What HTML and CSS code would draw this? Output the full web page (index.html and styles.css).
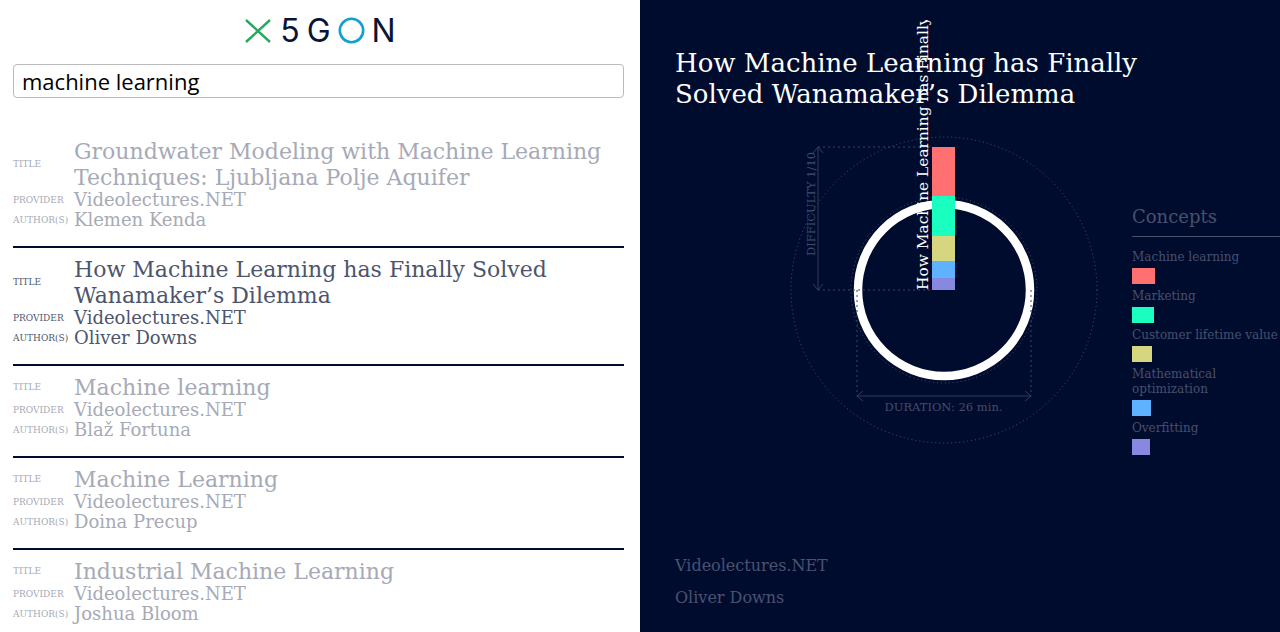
FILE: index.html
```html
<!DOCTYPE html>
<html lang="en">
  <head>
    <meta charset="utf-8" />
    <title>X5GON search</title>
    <link rel="stylesheet" href="styles.css">
  </head>

  <body>
    <div class="page">
      <!-- Search and results -->
      <section class="search-side">
        <div class="logo">
          <svg class="logo-x" viewBox="0 0 26 24"><path d="M1 1 L25 23 M25 1 L1 23"></path></svg>
          <span class="logo-letter five">5</span>
          <span class="logo-letter">G</span>
          <svg class="logo-o" viewBox="0 0 27 27"><circle cx="13.500" cy="13.500" r="11.700"></circle></svg>
          <span class="logo-letter">N</span>
        </div>
        <input class="search-box" type="text" value="machine learning">

        <div class="results">
          <div class="result">
            <span class="label">TITLE</span><span class="title">Groundwater Modeling with Machine Learning Techniques: Ljubljana Polje Aquifer</span>
            <span class="label">PROVIDER</span><span class="value">Videolectures.NET</span>
            <span class="label">AUTHOR(S)</span><span class="value">Klemen Kenda</span>
          </div>
          <div class="result active">
            <span class="label">TITLE</span><span class="title">How Machine Learning has Finally Solved Wanamaker’s Dilemma</span>
            <span class="label">PROVIDER</span><span class="value">Videolectures.NET</span>
            <span class="label">AUTHOR(S)</span><span class="value">Oliver Downs</span>
          </div>
          <div class="result">
            <span class="label">TITLE</span><span class="title">Machine learning</span>
            <span class="label">PROVIDER</span><span class="value">Videolectures.NET</span>
            <span class="label">AUTHOR(S)</span><span class="value">Blaž Fortuna</span>
          </div>
          <div class="result">
            <span class="label">TITLE</span><span class="title">Machine Learning</span>
            <span class="label">PROVIDER</span><span class="value">Videolectures.NET</span>
            <span class="label">AUTHOR(S)</span><span class="value">Doina Precup</span>
          </div>
          <div class="result">
            <span class="label">TITLE</span><span class="title">Industrial Machine Learning</span>
            <span class="label">PROVIDER</span><span class="value">Videolectures.NET</span>
            <span class="label">AUTHOR(S)</span><span class="value">Joshua Bloom</span>
          </div>
        </div>
      </section>

      <!-- Selected material -->
      <section class="detail-side">
        <h1 class="detail-title">How Machine Learning has Finally Solved Wanamaker’s Dilemma</h1>

        <svg class="chart" viewBox="0 0 400 440">
          <circle class="orbit" cx="224" cy="270" r="153"></circle>
          <circle class="orbit" cx="224" cy="270" r="93"></circle>
          <circle class="ring" cx="224" cy="270" r="86"></circle>

          <!-- difficulty guide -->
          <path class="guide-dash" d="M98 127 H212 M98 270 H212"></path>
          <path class="guide" d="M98 127 V270 M93 133 L98 127 L103 133 M93 264 L98 270 L103 264"></path>
          <text class="guide-text" transform="translate(95, 184) rotate(-90)" text-anchor="middle">DIFFICULTY 1/10</text>

          <!-- duration guide -->
          <path class="guide-dash" d="M137 270 V376 M311 270 V376"></path>
          <path class="guide" d="M137 376 H311 M143 371 L137 376 L143 381 M305 371 L311 376 L305 381"></path>
          <text class="guide-text" x="223.500" y="391" text-anchor="middle">DURATION: 26 min.</text>

          <rect x="212" y="127" width="23" height="49" fill="#ff7070"></rect>
          <rect x="212" y="176" width="23" height="40" fill="#1affc0"></rect>
          <rect x="212" y="216" width="23" height="25" fill="#d6d680"></rect>
          <rect x="212" y="241" width="23" height="17" fill="#5fb2ff"></rect>
          <rect x="212" y="258" width="23" height="12" fill="#8888e0"></rect>

          <text class="bar-title" transform="translate(208, 270) rotate(-90)">How Machine Learning has Finally Solved Wanamaker’s Dilemma</text>
        </svg>

        <div class="concepts">
          <h2 class="concepts-head">Concepts</h2>
          <div class="concept">Machine learning</div>
          <div class="swatch swatch-ml"></div>
          <div class="concept">Marketing</div>
          <div class="swatch swatch-mk"></div>
          <div class="concept">Customer lifetime value</div>
          <div class="swatch swatch-cl"></div>
          <div class="concept">Mathematical optimization</div>
          <div class="swatch swatch-mo"></div>
          <div class="concept">Overfitting</div>
          <div class="swatch swatch-of"></div>
        </div>

        <div class="detail-foot">
          <div>Videolectures.NET</div>
          <div>Oliver Downs</div>
        </div>
      </section>
    </div>
  </body>
</html>
```

FILE: styles.css
```css
html,
body {
  margin: 0;
  padding: 0;
  height: 632px;
  overflow: hidden;
  background-color: white;
}

.page {
  display: grid;
  grid-template-columns: 640px 640px;
  height: 632px;
  font-family: "DejaVu Serif", serif;
}

/* left side */
.search-side {
  padding: 0 16px 0 13px;
  overflow: hidden;
}

.logo {
  display: flex;
  justify-content: center;
  align-items: center;
  height: 64px;
  padding-bottom: 3px;
  padding-left: 4px;
  box-sizing: border-box;
  font-family: Inter, sans-serif;
  font-size: 32px;
  font-weight: 400;
  line-height: 32px;
  color: #0a1436;
}

.logo-x {
  width: 26px;
  height: 24px;
  margin-right: 9px;
  fill: none;
  stroke: #27a85f;
  stroke-width: 2.4;
}

.logo-o {
  width: 27px;
  height: 27px;
  margin: 0 7px;
  fill: none;
  stroke: #12a0d0;
  stroke-width: 2.6;
}

.logo-letter {
  display: block;
}

.five {
  margin-right: 7px;
}

.search-box {
  display: block;
  box-sizing: border-box;
  width: 611px;
  height: 34px;
  padding: 0 8px 1px;
  border: 1px solid #bbbbbb;
  border-radius: 4px;
  font-family: "Open Sans", sans-serif;
  font-size: 22px;
  font-weight: 500;
  color: black;
  outline: none;
}

.results {
  margin-top: 32px;
}

.result {
  display: grid;
  grid-template-columns: 61px 1fr;
  align-items: center;
  padding: 8px 0 16px;
  border-bottom: 2px solid #000c2e;
  color: #a6aab6;
}

.result:last-child {
  border-bottom: none;
}

.result.active {
  color: #4d556d;
}

.label {
  font-size: 9px;
}

.title {
  margin: 1px 0 -1px;
  font-size: 22px;
  line-height: 26px;
}

.value {
  font-size: 18px;
  line-height: 20px;
}

/* right side */
.detail-side {
  position: relative;
  display: flex;
  flex-direction: column;
  padding: 48px 0 18px 35px;
  box-sizing: border-box;
  height: 632px;
  background-color: #000c2e;
  overflow: hidden;
}

.detail-title {
  width: 480px;
  margin: 0;
  font-size: 26px;
  font-weight: normal;
  line-height: 31px;
  color: white;
}

/* free canvas over the title */
.chart {
  position: absolute;
  left: 80px;
  top: 20px;
  width: 400px;
  height: 440px;
  overflow: hidden;
}

.orbit {
  fill: none;
  stroke: #4a5472;
  stroke-width: 1;
  stroke-dasharray: 1 3;
}

.ring {
  fill: none;
  stroke: white;
  stroke-width: 8.500;
}

.guide {
  fill: none;
  stroke: #333c5a;
  stroke-width: 1;
}

.guide-dash {
  fill: none;
  stroke: #3a4363;
  stroke-width: 1;
  stroke-dasharray: 2 3;
}

.guide-text {
  font-size: 11.500px;
  fill: #444d6a;
}

.bar-title {
  font-size: 15.400px;
  fill: white;
}

.concepts {
  width: 148px;
  margin: 96px 0 0 457px;
  font-size: 12px;
  line-height: 15px;
  color: #48506c;
}

.concepts-head {
  margin: 0 0 13px;
  padding-bottom: 9px;
  border-bottom: 1px solid #48506c;
  font-size: 18px;
  font-weight: normal;
  line-height: 21px;
}

.swatch {
  height: 16px;
  margin: 3px 0 5px;
}

.swatch-ml { width: 23px; background-color: #ff7070; }
.swatch-mk { width: 22px; background-color: #1affc0; }
.swatch-cl { width: 20px; background-color: #d6d680; }
.swatch-mo { width: 19px; background-color: #5fb2ff; }
.swatch-of { width: 18px; background-color: #8888e0; }

.detail-foot {
  margin-top: auto;
  font-size: 16px;
  line-height: 32px;
  color: #4a5270;
}
```
